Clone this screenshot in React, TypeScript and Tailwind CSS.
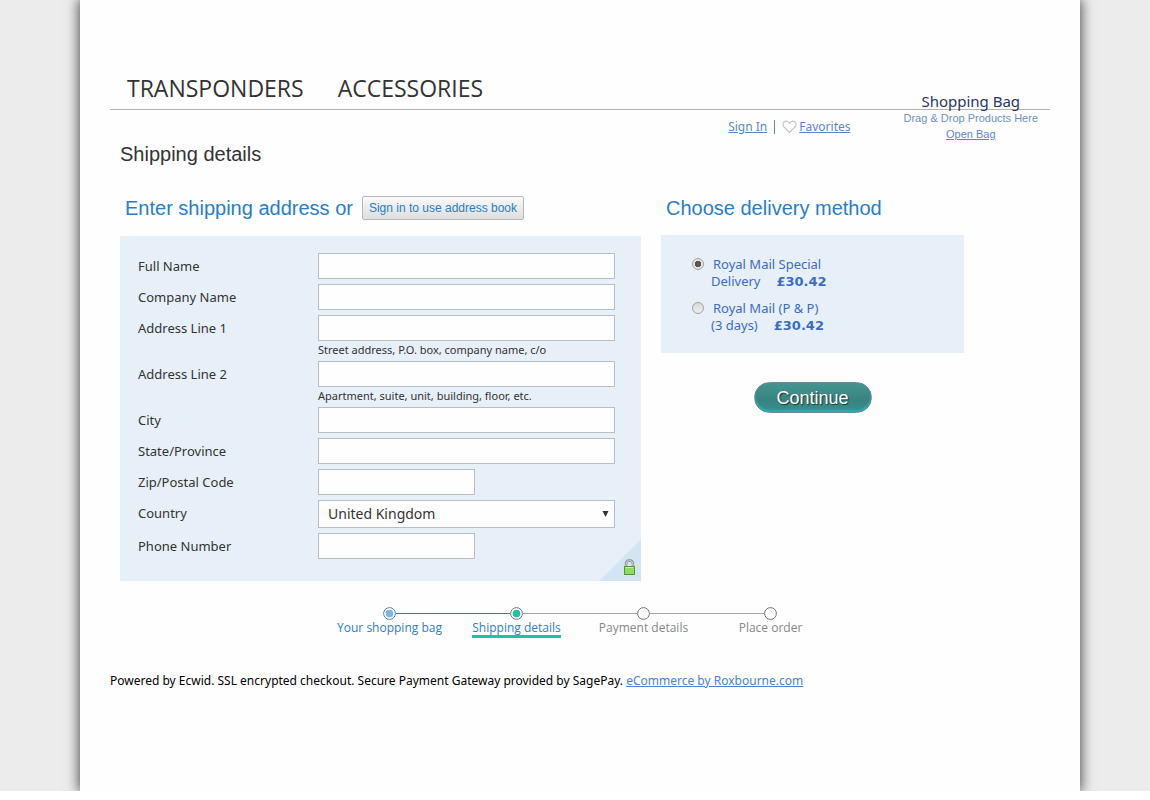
import { useState } from "react";

const fields = [
	{ id: "name", label: "Full Name" },
	{ id: "company", label: "Company Name" },
	{ id: "line1", label: "Address Line 1", hint: "Street address, P.O. box, company name, c/o" },
	{ id: "line2", label: "Address Line 2", hint: "Apartment, suite, unit, building, floor, etc." },
	{ id: "city", label: "City" },
	{ id: "state", label: "State/Province" },
	{ id: "zip", label: "Zip/Postal Code", short: true },
	{ id: "country", label: "Country", select: true },
	{ id: "phone", label: "Phone Number", short: true },
];

const methods = [
	{ id: "special", first: "Royal Mail Special", second: "Delivery", price: "£30.42" },
	{ id: "pp", first: "Royal Mail (P & P)", second: "(3 days)", price: "£30.42" },
];

const steps = [
	{ label: "Your shopping bag", state: "done" },
	{ label: "Shipping details", state: "current" },
	{ label: "Payment details", state: "next" },
	{ label: "Place order", state: "next" },
];

function Header() {
	return (
		<header>
			<nav className="flex gap-[34px] border-b border-[#b4b4b4] pt-[72px] pb-[5px] pl-[17px] font-['Open_Sans',sans-serif] text-[23px] leading-8 text-[#333]">
				<a href="#transponders">TRANSPONDERS</a>
				<a href="#accessories">ACCESSORIES</a>
			</nav>
			<div className="flex items-start justify-end gap-[53px] pr-3">
				<div className="flex items-center pt-2 font-['Noto_Sans',sans-serif] text-xs leading-[18px] text-[#5a86cf]">
					<a href="#signin" className="underline">
						Sign In
					</a>
					<span className="mx-[7px] h-[14px] w-px bg-[#5a86cf]" />
					<svg width="15" height="14" viewBox="0 0 15 14" className="mr-[2px]">
						<path
							d="M7.5 12.5 L2 6.8 C0.4 5 0.8 2.9 2.1 1.9 C3.7 0.7 6 1 7.5 3.2 C9 1 11.3 0.7 12.9 1.9 C14.2 2.9 14.6 5 13 6.8 Z"
							fill="none"
							stroke="#c2c2c2"
							strokeWidth="1.2"
						/>
					</svg>
					<a href="#favorites" className="underline">
						Favorites
					</a>
				</div>
				<div className="-mt-[17px] flex flex-col items-center font-['Liberation_Sans',sans-serif] text-[11px] leading-4">
					<span className="font-['Noto_Sans',sans-serif] text-[15px] leading-[17px] text-[#1f3864]">
						Shopping Bag
					</span>
					<span className="text-[#6d91c4]">Drag & Drop Products Here</span>
					<a href="#bag" className="text-[#5a86cf] underline">
						Open Bag
					</a>
				</div>
			</div>
		</header>
	);
}

function AddressForm() {
	return (
		<div className="relative bg-[#e7f0f8] pt-[17px] pr-[26px] pb-[17px] pl-[18px] font-['Noto_Sans',sans-serif] text-[13px] text-[#333]">
			{fields.map((f) => (
				<div key={f.id} className={f.hint ? "flex pb-[2px]" : "flex pb-[5px]"}>
					<label htmlFor={f.id} className="w-[180px] shrink-0 leading-[26px]">
						{f.label}
					</label>
					<div className="flex-1">
						{f.select ? (
							<div className="relative">
								<select
									id={f.id}
									className="block h-7 w-full appearance-none border border-[#b9bcc0] bg-[#fefefe] px-[9px] text-sm"
								>
									<option>United Kingdom</option>
								</select>
								<svg
									width="7"
									height="6"
									viewBox="0 0 7 6"
									className="pointer-events-none absolute top-[11px] right-[6px]"
								>
									<path d="M0.5 0 H6.5 L3.5 6 Z" fill="#333" />
								</svg>
							</div>
						) : (
							<input
								id={f.id}
								type="text"
								className={
									f.short
										? "block h-[26px] w-[157px] border border-[#b9bcc0] bg-[#fefefe] px-2"
										: "block h-[26px] w-full border border-[#b9bcc0] bg-[#fefefe] px-2"
								}
							/>
						)}
						{f.hint && <p className="text-[11px] leading-[18px]">{f.hint}</p>}
					</div>
				</div>
			))}
			<svg width="42" height="42" viewBox="0 0 42 42" className="absolute right-0 bottom-0">
				<path d="M42 0 V42 H0 Z" fill="#d3e5f2" />
				<path d="M27 28 V25 Q27 21.5 30.5 21.5 Q34 21.5 34 25 V28" fill="none" stroke="#8a8a8a" strokeWidth="2.4" />
				<path d="M27 28 V25 Q27 21.5 30.5 21.5 Q34 21.5 34 25 V28" fill="none" stroke="#e4e4e4" strokeWidth="0.8" />
				<rect x="25.5" y="27.5" width="10" height="8" fill="#8fdc62" stroke="#4f9a35" />
				<path d="M26.5 28.5 H34.5" stroke="#c3f0a5" />
			</svg>
		</div>
	);
}

function DeliveryMethods() {
	const [method, setMethod] = useState("special");
	return (
		<div className="bg-[#e7f0f8] pt-[21px] pb-[19px] pl-[31px] font-['Noto_Sans',sans-serif] text-[13px] leading-[17px] text-[#3b6cc4]">
			{methods.map((m) => (
				<label key={m.id} className="flex items-start pb-[10px] last:pb-0">
					<input
						type="radio"
						name="method"
						checked={method === m.id}
						onChange={() => setMethod(m.id)}
						className="mt-[2px] size-3 shrink-0 appearance-none rounded-full border border-[#a0a0a0] bg-linear-to-b from-[#d8d8d8] to-[#f0f0f0] checked:bg-[radial-gradient(circle,#555_0_3px,#e6e6e6_3px)]"
					/>
					<span className="pl-[7px]">
						<span className="block pl-[2px]">{m.first}</span>
						<span className="flex items-center gap-4">
							{m.second}
							<b className="font-['DejaVu_Sans',sans-serif]">{m.price}</b>
						</span>
					</span>
				</label>
			))}
		</div>
	);
}

function Steps() {
	return (
		<ol className="mx-auto flex w-[508px] pt-[26px] font-['Open_Sans',sans-serif] text-xs leading-[15px]">
			{steps.map((s, i) => (
				<li key={s.label} className="flex flex-1 flex-col items-center">
					<div className="flex w-full items-center">
						<span
							className={
								i === 0
									? "h-px flex-1"
									: i === 1
										? "h-px flex-1 bg-[#2a80c0]"
										: "h-px flex-1 bg-[#a3a7ab]"
							}
						/>
						<svg width="13" height="13" viewBox="0 0 13 13">
							<circle
								cx="6.5"
								cy="6.5"
								r="5.9"
								fill="#fefefe"
								stroke={s.state === "done" ? "#3f8cc8" : "#70757a"}
							/>
							{s.state === "done" && <circle cx="6.5" cy="6.5" r="3.8" fill="#7fb2dc" />}
							{s.state === "current" && <circle cx="6.5" cy="6.5" r="3.8" fill="#1cc4a4" />}
						</svg>
						<span
							className={
								i === 0
									? "h-px flex-1 bg-[#2a80c0]"
									: i === 3
										? "h-px flex-1"
										: "h-px flex-1 bg-[#a3a7ab]"
							}
						/>
					</div>
					{s.state === "next" ? (
						<span className="whitespace-nowrap text-[#85888c]">{s.label}</span>
					) : (
						<a
							href="#step"
							className={
								s.state === "current"
									? "border-b-[3px] border-[#1cc4a4] whitespace-nowrap text-[#2a80c8]"
									: "whitespace-nowrap text-[#2a80c8]"
							}
						>
							{s.label}
						</a>
					)}
				</li>
			))}
		</ol>
	);
}

export default function App() {
	return (
		<div className="overflow-hidden bg-[#ececec] pr-[70px] pl-20">
			<div className="bg-[#fefefe] px-[30px] pb-[101px] shadow-[0_0_12px_1px_rgba(0,0,0,0.7)]">
				<Header />
				<main className="pr-[86px] pl-[10px] font-['Liberation_Sans',sans-serif]">
					<h1 className="text-xl leading-6 text-[#333]">Shipping details</h1>
					<div className="flex items-start gap-5 pt-[30px]">
						<section className="min-w-0 flex-1">
							<div className="flex items-center gap-[9px] pb-4 pl-[5px]">
								<h2 className="text-xl leading-6 text-[#2a7dc4]">Enter shipping address or</h2>
								<button className="h-6 rounded-[2px] border border-[#b8b8b8] bg-linear-to-b from-[#fafafa] to-[#dedede] px-[6px] text-xs text-[#2a7dc4]">
									Sign in to use address book
								</button>
							</div>
							<AddressForm />
						</section>
						<section className="w-[303px] shrink-0">
							<h2 className="pb-[15px] pl-[5px] text-xl leading-6 text-[#2a7dc4]">Choose delivery method</h2>
							<DeliveryMethods />
							<div className="flex justify-center pt-[29px]">
								<button className="h-[31px] w-[118px] rounded-full border border-[#6b8a98] bg-linear-to-b from-[#459490] via-[#38837f] via-60% to-[#38908e] text-lg leading-none text-white shadow-[inset_0_-2px_2px_#22b4b4] text-shadow-[1px_1px_1px_rgba(0,0,0,0.6)]">
									Continue
								</button>
							</div>
						</section>
					</div>
				</main>
				<Steps />
				<footer className="pt-[34px] font-['Noto_Sans',sans-serif] text-xs leading-[18px] text-black">
					Powered by Ecwid. SSL encrypted checkout. Secure Payment Gateway provided by SagePay.{" "}
					<a href="#roxbourne" className="text-[#4a80d8] underline">
						eCommerce by Roxbourne.com
					</a>
				</footer>
			</div>
		</div>
	);
}
